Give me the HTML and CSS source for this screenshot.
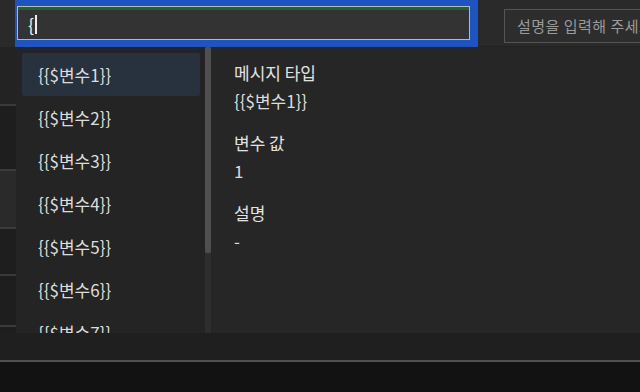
FILE: index.html
```html
<!DOCTYPE html>
<html>
<head>
    <meta charset="UTF-8" />
    <title>변수 선택</title>
    <link rel="stylesheet" href="styles.css">
</head>
<body>

<div class="toolbar">
  <div class="edge"></div>
  <div class="focus-ring">
    <div class="search-input"><span class="typed">{</span><span class="caret"></span></div>
  </div>
  <div class="side">
    <div class="divider"></div>
    <div class="desc-input">설명을 입력해 주세요</div>
  </div>
</div>

<section class="main">
  <div class="rows">
    <div class="row r1"></div>
    <div class="row r2"></div>
    <div class="row r3"></div>
    <div class="row r4"></div>
    <div class="row r5"></div>
    <div class="row r6"></div>
  </div>

  <div class="dropdown">
    <ul class="options">
      <li class="option selected">{{$변수1}}</li>
      <li class="option">{{$변수2}}</li>
      <li class="option">{{$변수3}}</li>
      <li class="option">{{$변수4}}</li>
      <li class="option">{{$변수5}}</li>
      <li class="option">{{$변수6}}</li>
      <li class="option">{{$변수7}}</li>
    </ul>
    <div class="scrollbar"><div class="thumb"></div></div>
    <div class="detail">
      <div class="field">
        <div class="label">메시지 타입</div>
        <div class="value">{{$변수1}}</div>
      </div>
      <div class="field">
        <div class="label">변수 값</div>
        <div class="value">1</div>
      </div>
      <div class="field">
        <div class="label">설명</div>
        <div class="value">-</div>
      </div>
    </div>
  </div>
</section>

<footer class="statusbar"></footer>

</body>
</html>
```

FILE: styles.css
```css
* {
  box-sizing: border-box;
}

body {
  margin: 0;
  background: #121212;
  font-family: "Noto Sans CJK KR", "Noto Sans", sans-serif;
  color: #dedede;
}

/* top bar with the focused search field */
.toolbar {
  display: flex;
  height: 47px;
}

.edge {
  width: 15px;
  background: #2a2a2a;
}

.focus-ring {
  width: 463px;
  background: #1d54c4;
  padding: 6px 8px 7px 2px;
}

.search-input {
  height: 34px;
  border: 1px solid #b8b8b8;
  background: #333;
  box-shadow: inset 0 3px 0 #1c6626;
  display: flex;
  align-items: center;
  padding: 2px 0 0 10px;
}

.typed {
  font-size: 18px;
  color: #eee;
}

.caret {
  width: 2px;
  height: 19px;
  margin-left: 1px;
  background: #eee;
}

.side {
  flex: 1;
  display: flex;
  background: #2a2a2a;
  overflow: hidden;
  border-bottom: 1px solid #222;
}

.divider {
  width: 2px;
  margin-left: 9px;
  background: #3b3b3b;
}

.desc-input {
  flex: none;
  width: 200px;
  height: 34px;
  margin: 9px 0 0 17px;
  border: 1px solid #555;
  background: #2d2d2d;
  padding-left: 12px;
  line-height: 32px;
  font-size: 15px;
  letter-spacing: 0.5px;
  color: #9a9a9a;
  white-space: nowrap;
  overflow: hidden;
}

/* table rows behind the dropdown */
.main {
  display: flex;
  height: 286px;
}

.rows {
  width: 16px;
  display: flex;
  flex-direction: column;
}

.row {
  background: #1e1e1e;
  border-top: 2px solid #3a3a3a;
}
.r1 { height: 57px; border-top: none; background: #232323; }
.r2 { height: 65px; }
.r3 { height: 58px; background: #2a2a2a; }
.r4 { height: 47px; }
.r5 { height: 51px; }
.r6 { height: 8px; }

/* the dropdown itself */
.dropdown {
  flex: 1;
  display: flex;
}

.options {
  width: 189px;
  margin: 0;
  padding: 6px 5px 0 6px;
  list-style-type: none;
  background: #242424;
  overflow: hidden;
}

.option {
  height: 43px;
  line-height: 43px;
  padding-left: 16px;
  font-size: 17px;
  color: #dcdcdc;
  border-radius: 2px;
}

.selected {
  background: #28313e;
}

.scrollbar {
  width: 6px;
  background: #2e2e2e;
}

.thumb {
  height: 206px;
  background: #4f4f4f;
  border-radius: 2px;
}

.detail {
  flex: 1;
  background: #262626;
  padding: 12px 23px;
}

.field {
  margin-bottom: 14px;
  font-size: 17px;
  line-height: 28px;
}

.label {
  color: #e2e2e2;
}

.value {
  color: #dcdcdc;
}

.statusbar {
  height: 29px;
  background: #1f1f1f;
  border-bottom: 2px solid #505050;
}
```
